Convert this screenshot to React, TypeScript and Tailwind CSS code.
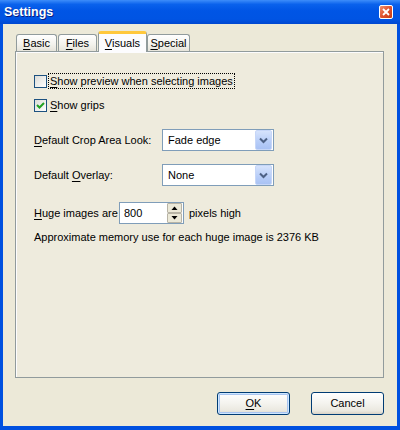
import React from "react";

function U({ children }: { children: React.ReactNode }) {
  return <span className="underline decoration-1 underline-offset-[2px]">{children}</span>;
}

function Checkbox({ checked }: { checked?: boolean }) {
  return (
    <div className="w-[13px] h-[13px] border border-[#1C5180] bg-[linear-gradient(135deg,#DCDCD7_0%,#FFFFFF_100%)] flex items-center justify-center shrink-0">
      {checked && (
        <svg width="9" height="9" viewBox="0 0 9 9">
          <path d="M1 4 L3.5 6.5 L8 2" fill="none" stroke="#21A121" strokeWidth="2" />
        </svg>
      )}
    </div>
  );
}

function Combo({ value }: { value: string }) {
  return (
    <div className="w-[112px] h-[22px] border border-[#7F9DB9] bg-white flex items-center">
      <span className="flex-1 pl-[5px] text-[11px]">{value}</span>
      <div className="w-[17px] h-[20px] mr-px rounded-[2px] border border-[#C6D6F8] bg-[linear-gradient(to_bottom,#D6E3FC_0%,#B7CDF8_60%,#A9C2F4_100%)] flex items-center justify-center">
        <svg width="9" height="7" viewBox="0 0 9 7">
          <path d="M1 1.5 L4.5 5 L8 1.5" fill="none" stroke="#4D6185" strokeWidth="2" />
        </svg>
      </div>
    </div>
  );
}

function Tab({ label, selected, w }: { label: React.ReactNode; selected?: boolean; w: string }) {
  if (selected) {
    return (
      <div className={w + " relative z-10 -mb-px h-[21px] pt-[3px] text-center bg-[#FCFCFE] border-x border-[#919B9C] rounded-t-[3px] border-t-[3px] border-t-[#FFC83C] text-[11px] leading-[13px]"}>
        {label}
      </div>
    );
  }
  return (
    <div className={w + " h-[17px] pt-[2px] text-center bg-[linear-gradient(to_bottom,#FFFFFF_0%,#F3F2EC_60%,#E6E4DA_100%)] border-x border-t border-[#919B9C] rounded-t-[3px] text-[11px] leading-[13px]"}>
      {label}
    </div>
  );
}

function XpButton({ children, focused }: { children: React.ReactNode; focused?: boolean }) {
  return (
    <div
      className={
        "w-[73px] h-[23px] rounded-[3px] border border-[#003C74] bg-[linear-gradient(to_bottom,#FFFFFF_0%,#F4F3EE_50%,#EAE8DF_85%,#D8D2C6_100%)] flex items-center justify-center text-[11px] " +
        (focused ? "shadow-[inset_0_0_0_1px_#CEE7FF,inset_0_0_0_2px_#A8C4F0]" : "")
      }
    >
      {children}
    </div>
  );
}

export default function App() {
  return (
    <div className="w-[400px] h-[430px] bg-[#0050E0] flex flex-col font-['Liberation_Sans',Arial,sans-serif] text-black select-none">
      {/* title bar */}
      <div className="h-[24px] shrink-0 bg-[linear-gradient(to_bottom,#3D8DFA_0%,#0A62EC_18%,#0055E5_45%,#0054E3_80%,#0048D0_100%)] flex items-center px-[4px]">
        <span className="flex-1 text-white font-bold text-[12.5px] [text-shadow:1px_1px_0_#0A1E80]">Settings</span>
        <div className="w-[14px] h-[14px] mr-[3px] rounded-[2px] border border-white bg-[linear-gradient(135deg,#F0906E_0%,#E0522E_50%,#C43A14_100%)] flex items-center justify-center">
          <svg width="8" height="8" viewBox="0 0 8 8">
            <path d="M1 1 L7 7 M7 1 L1 7" stroke="white" strokeWidth="1.8" />
          </svg>
        </div>
      </div>

      {/* body */}
      <div className="flex-1 mx-[3px] mb-[4px] bg-[#ECE9D8] flex flex-col pl-[12px] pr-[13px]">
        {/* tabs */}
        <div className="h-[19px] mt-[8px] flex items-end pl-px">
          <Tab w="w-[41px] mr-px" label={<><U>B</U>asic</>} />
          <Tab w="w-[39px] mr-px" label={<><U>F</U>iles</>} />
          <Tab w="w-[49px]" selected label={<><U>V</U>isuals</>} />
          <Tab w="w-[43px]" label={<><U>S</U>pecial</>} />
        </div>

        {/* panel */}
        <div className="h-[327px] border border-[#919B9C] bg-[#EEEBDD] shadow-[inset_1px_1px_0_#FCFCFE] flex flex-col pl-[18px] text-[11px]">
          <div className="mt-[21px] h-[16px] flex items-center gap-[2px]">
            <Checkbox />
            <span className="outline outline-1 outline-dotted outline-black px-px leading-[14px]">
              <U>S</U>how preview when selecting images
            </span>
          </div>
          <div className="mt-[8px] h-[16px] flex items-center gap-[3px]">
            <Checkbox checked />
            <span className="leading-[14px]">
              <U>S</U>how grips
            </span>
          </div>

          <div className="mt-[16px] flex items-center">
            <span className="w-[128px]">
              <U>D</U>efault Crop Area Look:
            </span>
            <Combo value="Fade edge" />
          </div>
          <div className="mt-[13px] flex items-center">
            <span className="w-[128px]">
              Default <U>O</U>verlay:
            </span>
            <Combo value="None" />
          </div>

          <div className="mt-[16px] flex items-center">
            <span className="w-[85px]">
              <U>H</U>uge images are
            </span>
            <div className="w-[65px] h-[22px] border border-[#7F9DB9] bg-white flex items-center">
              <span className="flex-1 pl-[4px]">800</span>
              <div className="w-[15px] h-[20px] mr-px flex flex-col gap-0">
                <div className="h-[10px] border border-[#B8B4A6] bg-[#ECE9D8] rounded-[1px] flex items-center justify-center">
                  <svg width="7" height="4" viewBox="0 0 7 4">
                    <path d="M0.5 4 L3.5 0.5 L6.5 4 Z" fill="black" />
                  </svg>
                </div>
                <div className="h-[10px] border border-[#B8B4A6] bg-[#ECE9D8] rounded-[1px] flex items-center justify-center">
                  <svg width="7" height="4" viewBox="0 0 7 4">
                    <path d="M0.5 0 L3.5 3.5 L6.5 0 Z" fill="black" />
                  </svg>
                </div>
              </div>
            </div>
            <span className="ml-[5px]">pixels high</span>
          </div>
          <div className="mt-[6px] leading-[14px]">
            Approximate memory use for each huge image is 2376 KB
          </div>
        </div>

        {/* buttons */}
        <div className="mt-[14px] flex justify-end gap-[21px]">
          <XpButton focused>
            <U>O</U>K
          </XpButton>
          <XpButton>Cancel</XpButton>
        </div>
      </div>
    </div>
  );
}
